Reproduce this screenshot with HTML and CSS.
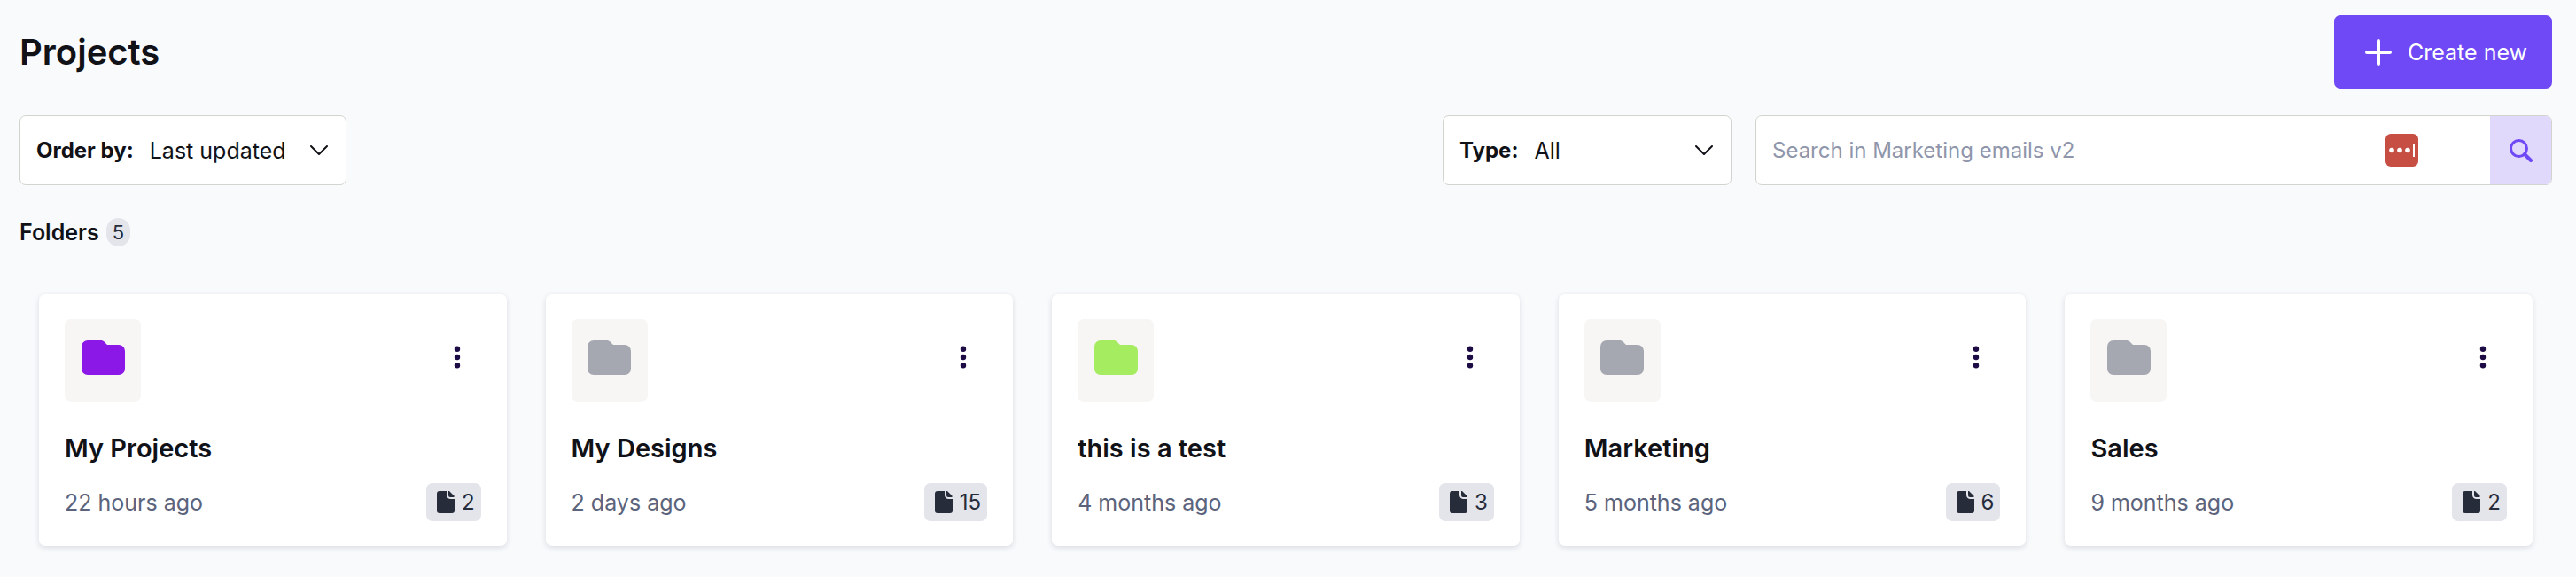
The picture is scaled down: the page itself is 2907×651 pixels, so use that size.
FILE: index.html
```html
<!DOCTYPE html>
<html lang="en">
<head>
  <meta charset="UTF-8" />
  <meta name="viewport" content="width=device-width, initial-scale=1" />
  <title>Projects</title>
  <link rel="stylesheet" href="styles.css">
</head>
<body>

  <!-- Shared icons -->
  <svg class="sprite" aria-hidden="true">
    <symbol id="icon-folder" viewBox="0 0 49 39">
      <path d="M7 0h14c2.500 0 3.700 .6 5 2l3 3h13a7 7 0 0 1 7 7v20a7 7 0 0 1-7 7H7a7 7 0 0 1-7-7V7a7 7 0 0 1 7-7z" />
    </symbol>
    <symbol id="icon-file" viewBox="0 0 20 25">
      <path d="M3 0h8v4.500A4.500 4.500 0 0 0 15.500 9H20v13a3 3 0 0 1-3 3H3a3 3 0 0 1-3-3V3a3 3 0 0 1 3-3z" />
      <path d="M13 0h1l5.500 5.500V7H15a2 2 0 0 1-2-2z" />
    </symbol>
    <symbol id="icon-more" viewBox="0 0 8 26">
      <circle cx="4" cy="3.700" r="3.200" />
      <circle cx="4" cy="13" r="3.200" />
      <circle cx="4" cy="22.300" r="3.200" />
    </symbol>
  </svg>

  <main class="page">
    <header class="page-header">
      <h1>Projects</h1>
      <button class="create-btn" type="button">
        <svg class="icon-plus" viewBox="0 0 30 30" aria-hidden="true"><path d="M15 2v26M2 15h26" /></svg>
        Create new
      </button>
    </header>

    <div class="toolbar">
      <div class="select-box order-box">
        <label for="order">Order by:</label>
        <select id="order">
          <option>Last updated</option>
          <option>Name</option>
        </select>
        <svg class="icon-chevron" viewBox="0 0 20 12" aria-hidden="true"><path d="M1 1l9 9 9-9" /></svg>
      </div>

      <div class="select-box type-box">
        <label for="type">Type:</label>
        <select id="type">
          <option>All</option>
          <option>Folders</option>
        </select>
        <svg class="icon-chevron" viewBox="0 0 20 12" aria-hidden="true"><path d="M1 1l9 9 9-9" /></svg>
      </div>

      <form class="search" role="search">
        <input type="search" placeholder="Search in Marketing emails v2" aria-label="Search" />
        <svg class="icon-password" viewBox="0 0 37 37" aria-hidden="true">
          <rect width="37" height="37" rx="6" />
          <circle cx="7" cy="18.500" r="2.800" />
          <circle cx="16" cy="18.500" r="2.800" />
          <circle cx="25" cy="18.500" r="2.800" />
          <path d="M32 11v15" />
        </svg>
        <button class="search-btn" type="submit" aria-label="Search">
          <svg class="icon-search" viewBox="0 0 26 26" aria-hidden="true">
            <circle cx="10.500" cy="10.500" r="9" />
            <path d="M17 17l7 7" stroke-width="4" />
          </svg>
        </button>
      </form>
    </div>

    <h2 class="section-title">Folders <span class="count">5</span></h2>

    <section class="folders" aria-label="Folders">
      <article class="card">
        <div class="card-top">
          <div class="thumb purple"><svg class="icon-folder"><use href="#icon-folder" /></svg></div>
          <button class="more-btn" type="button" aria-label="More options"><svg class="icon-more"><use href="#icon-more" /></svg></button>
        </div>
        <h3>My Projects</h3>
        <div class="card-bottom">
          <span class="updated">22 hours ago</span>
          <span class="files"><svg class="icon-file"><use href="#icon-file" /></svg>2</span>
        </div>
      </article>

      <article class="card">
        <div class="card-top">
          <div class="thumb"><svg class="icon-folder"><use href="#icon-folder" /></svg></div>
          <button class="more-btn" type="button" aria-label="More options"><svg class="icon-more"><use href="#icon-more" /></svg></button>
        </div>
        <h3>My Designs</h3>
        <div class="card-bottom">
          <span class="updated">2 days ago</span>
          <span class="files"><svg class="icon-file"><use href="#icon-file" /></svg>15</span>
        </div>
      </article>

      <article class="card">
        <div class="card-top">
          <div class="thumb green"><svg class="icon-folder"><use href="#icon-folder" /></svg></div>
          <button class="more-btn" type="button" aria-label="More options"><svg class="icon-more"><use href="#icon-more" /></svg></button>
        </div>
        <h3>this is a test</h3>
        <div class="card-bottom">
          <span class="updated">4 months ago</span>
          <span class="files"><svg class="icon-file"><use href="#icon-file" /></svg>3</span>
        </div>
      </article>

      <article class="card">
        <div class="card-top">
          <div class="thumb"><svg class="icon-folder"><use href="#icon-folder" /></svg></div>
          <button class="more-btn" type="button" aria-label="More options"><svg class="icon-more"><use href="#icon-more" /></svg></button>
        </div>
        <h3>Marketing</h3>
        <div class="card-bottom">
          <span class="updated">5 months ago</span>
          <span class="files"><svg class="icon-file"><use href="#icon-file" /></svg>6</span>
        </div>
      </article>

      <article class="card">
        <div class="card-top">
          <div class="thumb"><svg class="icon-folder"><use href="#icon-folder" /></svg></div>
          <button class="more-btn" type="button" aria-label="More options"><svg class="icon-more"><use href="#icon-more" /></svg></button>
        </div>
        <h3>Sales</h3>
        <div class="card-bottom">
          <span class="updated">9 months ago</span>
          <span class="files"><svg class="icon-file"><use href="#icon-file" /></svg>2</span>
        </div>
      </article>
    </section>
  </main>

</body>
</html>
```

FILE: styles.css
```css
:root {
  --bg: #f9fafc;
  --text: #111217;
  --muted: #5b647c;
  --dark: #272c3a;
  --border: #d3d3d0;
  --badge: #e4e5eb;
  --accent: #6f49f6;
  --accent-light: #e0d9fb;
}

* {
  box-sizing: border-box;
}

body {
  margin: 0;
  font-family: Inter, sans-serif;
  font-size: 24px;
  line-height: 32px;
  background: var(--bg);
  color: var(--text);
}

button,
input,
select {
  font: inherit;
  color: inherit;
}

button {
  border: none;
  cursor: pointer;
}

h1,
h2,
h3 {
  margin: 0;
}

.sprite {
  display: none;
}

.page {
  padding: 17px 27px 34px 22px;
}

/* Header */
.page-header {
  display: flex;
  align-items: center;
  justify-content: space-between;
}

h1 {
  font-size: 40px;
  line-height: 48px;
  font-weight: 600;
}

.create-btn {
  display: flex;
  align-items: center;
  gap: 18px;
  height: 83px;
  padding: 0 28px 0 35px;
  border-radius: 7px;
  background: var(--accent);
  color: #fff;
  font-size: 25px;
}

.icon-plus {
  width: 30px;
  height: 30px;
  fill: none;
  stroke: #fff;
  stroke-width: 4;
  stroke-linecap: round;
}

/* Toolbar */
.toolbar {
  display: flex;
  margin-top: 30px;
  height: 79px;
}

.select-box {
  display: flex;
  align-items: center;
  position: relative;
  padding-left: 18px;
  border: 1px solid var(--border);
  border-radius: 7px;
  background: #fff;
}

.select-box label {
  font-weight: 700;
}

.select-box select {
  flex: 1;
  align-self: stretch;
  min-width: 0;
  padding: 0 56px 0 18px;
  border: none;
  background: transparent;
  font-size: 25px;
  appearance: none;
}

.icon-chevron {
  position: absolute;
  right: 20px;
  width: 20px;
  height: 12px;
  fill: none;
  stroke: var(--text);
  stroke-width: 2;
  stroke-linecap: round;
  stroke-linejoin: round;
  pointer-events: none;
}

.order-box {
  width: 369px;
  margin-right: auto;
}

.type-box {
  width: 326px;
  margin-right: 27px;
}

.search {
  display: flex;
  align-items: center;
  width: 899px;
  border: 1px solid var(--border);
  border-radius: 7px;
  background: #fff;
  overflow: hidden;
}

.search input {
  flex: 1;
  align-self: stretch;
  min-width: 0;
  padding: 0 18px;
  border: none;
  background: transparent;
  appearance: none;
}

.search input::placeholder {
  color: #8f96ab;
  opacity: 1;
}

.icon-password {
  width: 37px;
  height: 37px;
  margin-right: 81px;
  fill: #fff;
  stroke: #fff;
}

.icon-password rect {
  fill: #c74e43;
  stroke: none;
}

.icon-password circle {
  stroke: none;
}

.icon-password path {
  stroke-width: 2;
}

.search-btn {
  display: flex;
  align-items: center;
  justify-content: center;
  align-self: stretch;
  width: 69px;
  padding: 0;
  background: var(--accent-light);
}

.icon-search {
  width: 26px;
  height: 26px;
  fill: none;
  stroke: var(--accent);
  stroke-width: 3;
  stroke-linecap: round;
}

/* Folders */
.section-title {
  display: flex;
  align-items: center;
  gap: 8px;
  margin-top: 37px;
  font-size: 25px;
  line-height: 32px;
  font-weight: 600;
}

.count {
  padding: 0 7px;
  border-radius: 14px;
  background: var(--badge);
  color: var(--dark);
  font-size: 22px;
  font-weight: 400;
}

.folders {
  display: grid;
  grid-template-columns: repeat(5, 1fr);
  gap: 44px;
  margin: 54px 22px 0;
}

.card {
  padding: 28px 29px;
  border-radius: 7px;
  background: #fff;
  box-shadow: 0 2px 6px rgba(30, 35, 60, 0.14);
}

.card-top {
  display: flex;
  align-items: flex-start;
  justify-content: space-between;
}

.thumb {
  display: flex;
  justify-content: center;
  width: 86px;
  height: 93px;
  padding-top: 24px;
  border-radius: 7px;
  background: #f7f6f4;
  color: #a5a8b1;
}

.thumb.purple {
  color: #8b18e6;
}

.thumb.green {
  color: #a5ec60;
}

.icon-folder {
  width: 49px;
  height: 39px;
  fill: currentColor;
}

.more-btn {
  display: flex;
  align-items: center;
  justify-content: center;
  width: 54px;
  height: 86px;
  padding: 0;
  background: transparent;
}

.icon-more {
  width: 8px;
  height: 26px;
  fill: #1c0b45;
}

.card h3 {
  margin-top: 35px;
  font-size: 29px;
  line-height: 36px;
  font-weight: 600;
}

.card-bottom {
  display: flex;
  align-items: center;
  justify-content: space-between;
  margin-top: 21px;
}

.updated {
  color: var(--muted);
  font-size: 25px;
}

.files {
  display: flex;
  align-items: center;
  gap: 8px;
  height: 43px;
  padding: 0 7px 0 12px;
  border-radius: 7px;
  background: var(--badge);
  color: var(--dark);
}

.icon-file {
  width: 20px;
  height: 25px;
  fill: currentColor;
}
```
